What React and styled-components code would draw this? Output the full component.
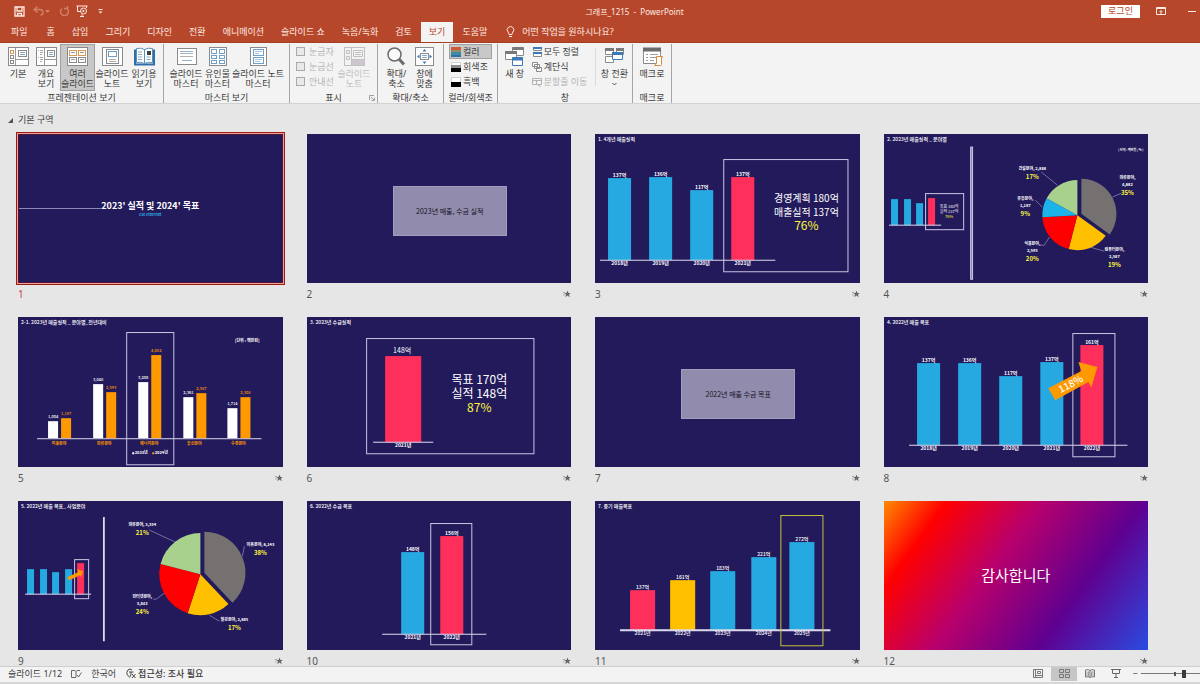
import React, { useState } from "react";
import styled, { createGlobalStyle } from "styled-components";

const GlobalStyle = createGlobalStyle`
  * {
    box-sizing: border-box;
  }
  body {
    margin: 0;
    font-family: "Noto Sans", "Noto Sans CJK KR", sans-serif;
    font-size: 9px;
    line-height: 10px;
    color: #3b3b3b;
  }
  button, input {
    font: inherit;
    color: inherit;
  }
`;

const Window = styled.div`
  display: flex;
  flex-direction: column;
  height: 100vh;
  background-color: #e6e6e6;
`;

const Header = styled.header`
  background-color: #b7472a;
  border-bottom: 1px solid #a33f26;
  color: #fdeae4;
`;

const TitleBar = styled.div`
  display: flex;
  align-items: center;
  height: 22px;
`;

const QuickAccess = styled.div`
  display: flex;
  align-items: center;
  padding-left: 12px;
  width: 112px;
`;

const BarButton = styled.button`
  display: flex;
  align-items: center;
  justify-content: center;
  width: ${({ $w }) => $w || 14}px;
  height: 16px;
  margin-right: ${({ $gap }) => $gap || 0}px;
  padding: 0;
  border: none;
  background: none;
  opacity: ${({ disabled }) => (disabled ? 0.35 : 1)};
`;

const Title = styled.h1`
  flex: 1;
  margin: 0;
  padding: 2px 0 0 56px;
  font-size: 8px;
  font-weight: 400;
  text-align: center;
  white-space: pre;
`;

const WindowActions = styled.div`
  display: flex;
  align-items: center;
  padding-right: 2px;
`;

const Login = styled.button`
  width: 39px;
  height: 13px;
  margin-right: 14px;
  padding: 0;
  border: none;
  background-color: #fff;
  color: #b7472a;
  line-height: 12px;
`;

const Tabs = styled.nav`
  display: flex;
  align-items: stretch;
  gap: 1px;
  height: 20px;
  padding-left: 3px;
`;

const Tab = styled.button`
  padding: 0 8px;
  margin-right: ${({ $wide }) => ($wide ? 2 : 0)}px;
  border: none;
  background-color: ${({ $active }) => ($active ? "#f3f3f3" : "transparent")};
  color: ${({ $active }) => ($active ? "#b7472a" : "inherit")};
  white-space: nowrap;
  cursor: pointer;
`;

const TellMe = styled.button`
  display: flex;
  align-items: center;
  gap: 7px;
  margin-left: 10px;
  padding: 0;
  border: none;
  background: none;
`;

const Ribbon = styled.div`
  display: flex;
  height: 61px;
  padding-top: 1px;
  background-color: #f3f3f3;
  border-bottom: 1px solid #d2d2d2;
`;

const Group = styled.section`
  position: relative;
  display: flex;
  flex-direction: column;
  width: ${({ $w }) => $w}px;
  border-right: 1px solid #a5a5a5;
`;

const GroupBody = styled.div`
  flex: 1;
  display: flex;
  justify-content: center;
  align-items: flex-start;
`;

const GroupLabel = styled.div`
  height: 10px;
  text-align: center;
  white-space: nowrap;
`;

const Launcher = styled.button`
  position: absolute;
  right: 1px;
  bottom: 1px;
  display: flex;
  padding: 1px;
  border: none;
  background: none;
`;

const LargeButton = styled.button`
  display: flex;
  flex-direction: column;
  align-items: center;
  width: ${({ $w }) => $w}px;
  height: 47px;
  padding: 2px 0 0;
  border: 1px solid ${({ $active }) => ($active ? "#a0a0a0" : "transparent")};
  background-color: ${({ $active }) => ($active ? "#c8c8c8" : "transparent")};
  color: ${({ disabled }) => (disabled ? "#b4b4b4" : "inherit")};
  opacity: ${({ disabled }) => (disabled ? 0.8 : 1)};
  white-space: pre;
  svg {
    flex: none;
    margin-bottom: 2px;
  }
`;

const Stack = styled.div`
  display: flex;
  flex-direction: column;
  width: ${({ $w }) => $w || "auto"};
`;

const SmallButton = styled.button`
  display: flex;
  align-items: center;
  gap: 2px;
  height: 15px;
  padding: 0 3px 0 1px;
  border: 1px solid ${({ $active }) => ($active ? "#a0a0a0" : "transparent")};
  background-color: ${({ $active }) => ($active ? "#c8c8c8" : "transparent")};
  color: ${({ disabled }) => (disabled ? "#b4b4b4" : "inherit")};
  white-space: nowrap;
`;

const CheckLabel = styled.label`
  display: flex;
  align-items: center;
  gap: 4px;
  height: 15px;
  color: #b4b4b4;
  white-space: nowrap;
`;

const CheckBox = styled.input`
  appearance: none;
  width: 9px;
  height: 9px;
  margin: 0;
  border: 1px solid #a9a9a9;
  background-color: #e9e9e9;
`;

const Divider = styled.div`
  width: 1px;
  height: 38px;
  margin: 4px 2px 0 4px;
  background-color: #dadada;
`;

const Workspace = styled.main`
  flex: 1;
  min-height: 0;
  overflow-y: auto;
  scrollbar-width: none;
`;

const SectionTitle = styled.h2`
  display: flex;
  align-items: center;
  gap: 5px;
  height: 30px;
  margin: 0;
  padding: 2px 0 0 8px;
  font-size: 9px;
  font-weight: 400;
`;

const SlideGrid = styled.ol`
  display: grid;
  grid-template-columns: repeat(4, 1fr);
  column-gap: 24px;
  margin: 0;
  padding: 0 52px 0 18px;
  list-style: none;
`;

const Slide = styled.div`
  display: grid;
  place-items: center;
  aspect-ratio: 264 / 149;
  overflow: hidden;
  background: ${({ $background }) => $background || "#231a5b"};
  box-shadow: ${({ $selected }) =>
    $selected ? "0 0 0 1px #f0a096, 0 0 0 2px #9c1c14" : "none"};
  border: ${({ $selected }) => ($selected ? "1px solid #4d1638" : "none")};
  color: #fff;
  font-family: "Noto Sans CJK KR", sans-serif;
`;

const Caption = styled.div`
  display: flex;
  align-items: center;
  justify-content: space-between;
  height: 34px;
  padding-bottom: 12px;
  font-size: 10px;
  color: ${({ $selected }) => ($selected ? "#c8443c" : "#555")};
`;

const Cover = styled.div`
  display: grid;
  grid-template-columns: 1fr auto 1fr;
  align-items: center;
  width: 100%;
`;

const CoverLine = styled.div`
  height: 1px;
  margin-top: 5px;
  background-color: #8d88b4;
`;

const CoverTitle = styled.div`
  font-size: 9px;
  font-weight: 700;
  line-height: 10px;
`;

const CoverSub = styled.div`
  grid-column: 2;
  font-size: 4px;
  font-weight: 500;
  line-height: 6px;
  text-align: center;
  color: #2fc0f5;
`;

const Plate = styled.div`
  display: grid;
  place-items: center;
  width: 43%;
  height: 50px;
  margin: 5px 0 0 22px;
  border: 1px solid #a29dbd;
  background-color: #918bad;
  color: #16121f;
  font-size: 7px;
  white-space: nowrap;
`;

const Thanks = styled.div`
  font-size: 15px;
  line-height: 20px;
`;

const Canvas = styled.svg`
  display: block;
  width: 100%;
  height: 100%;
  fill: #fff;
  font-size: 5px;
  font-weight: 700;
  text-anchor: middle;
`;

const StatusBar = styled.footer`
  display: flex;
  align-items: center;
  height: 18px;
  padding: 0 0 2px 8px;
  border-top: 1px solid #cfcfcf;
  border-bottom: 2px solid #d6d6d6;
  background-color: #f3f3f3;
`;

const StatusItem = styled.button`
  display: flex;
  align-items: center;
  gap: 2px;
  height: 14px;
  margin-right: 9px;
  padding: 0;
  border: none;
  background: none;
  font-weight: ${({ $strong }) => ($strong ? 500 : 400)};
  white-space: nowrap;
`;

const StatusRight = styled.div`
  display: flex;
  align-items: center;
  margin-left: auto;
`;

const ViewButton = styled.button`
  display: flex;
  align-items: center;
  justify-content: center;
  width: 26px;
  height: 14px;
  padding: 0;
  border: none;
  background-color: ${({ $active }) => ($active ? "#c6c6c6" : "transparent")};
`;

const ZoomButton = styled.button`
  width: 12px;
  padding: 0;
  border: none;
  background: none;
`;

const ZoomSlider = styled.input`
  appearance: none;
  width: 59px;
  height: 8px;
  margin: 0;
  background: linear-gradient(#555, #555) 33px 50% / 2px 4px no-repeat,
    linear-gradient(#777, #777) 0 50% / 100% 1px no-repeat;
  &::-webkit-slider-thumb {
    appearance: none;
    width: 4px;
    height: 8px;
    background-color: #3a3a3a;
  }
`;

const gray = { fill: "#fff", stroke: "#8a8a8a" };
const blue = { fill: "#fff", stroke: "#6f9fc6" };
const orange = { fill: "#fff", stroke: "#d99a55" };

const icons = {
  normal: (
    <>
      <rect x="0.5" y="0.5" width="20" height="18" {...gray} />
      <path d="M7.5 1v17M8 12.5h12" stroke="#9a9a9a" />
      <rect x="2.5" y="3.5" width="3" height="3" {...orange} />
      <rect x="2.5" y="8.5" width="3" height="3" {...gray} />
      <rect x="2.5" y="13.5" width="3" height="3" {...gray} />
      <rect x="10.5" y="3.5" width="8" height="6" {...gray} />
      <path d="M12 5.5h5M12 7.5h5" stroke="#8aa9c4" />
    </>
  ),
  outline: (
    <>
      <rect x="0.5" y="0.5" width="20" height="18" {...gray} />
      <path d="M8.5 1v17M9 12.5h11" stroke="#9a9a9a" />
      <path d="M2 3.5h1M4 3.5h3M4 5.5h3M4 7.5h2M2 10.5h1M4 10.5h3M4 12.5h3M4 14.5h2" stroke="#a5a5a5" />
      <rect x="11.5" y="3.5" width="7" height="6" {...gray} />
      <path d="M13 5.5h4M13 7.5h4" stroke="#8aa9c4" />
    </>
  ),
  sorter: (
    <>
      <rect x="0.5" y="0.5" width="20" height="18" {...gray} />
      <rect x="2.5" y="3.5" width="7" height="5" {...orange} />
      <rect x="11.5" y="3.5" width="7" height="5" {...orange} />
      <rect x="2.5" y="10.5" width="7" height="5" {...gray} />
      <rect x="11.5" y="10.5" width="7" height="5" {...gray} />
      <path d="M4 5.5h4M13 5.5h4M4 12.5h4M13 12.5h4" stroke="#9a9a9a" />
    </>
  ),
  notes: (
    <>
      <rect x="0.5" y="0.5" width="20" height="18" {...gray} />
      <rect x="4.5" y="2.5" width="12" height="14" {...gray} />
      <rect x="6.5" y="4.5" width="8" height="5" {...blue} />
      <path d="M7 12.5h7M7 14.5h7" stroke="#b0b0b0" />
    </>
  ),
  reading: (
    <>
      <path d="M1 2.5v15h19v-15" fill="#dcebf7" stroke="#2f6ea8" strokeWidth="2" />
      <path d="M2.5 1.5q4-1 8 1q4-2 8-1v14q-4-1-8 1q-4-2-8-1z" fill="#fff" stroke="#5b8fb9" />
      <path d="M10.5 2.5v14" stroke="#5b8fb9" />
      <path d="M4 5h4M4 7.5h4M4 10h4M4 12.5h4M12.5 10h4M12.5 12.5h4" stroke="#7fa8ca" />
      <rect x="13" y="4" width="4" height="4" fill="#3f3f3f" />
    </>
  ),
  slideMaster: (
    <>
      <rect x="1.5" y="1.5" width="19" height="16" {...gray} />
      <path d="M4 6.5h13M4 9.5h13" stroke="#b0b0b0" />
      <path d="M4 4.5h13M6 13.5h10" stroke="#8fb3d2" />
    </>
  ),
  handoutMaster: (
    <>
      <rect x="2.5" y="0.5" width="17" height="18" {...gray} />
      <rect x="4.5" y="2.5" width="5" height="4" {...blue} />
      <rect x="12.5" y="2.5" width="5" height="4" {...blue} />
      <rect x="4.5" y="8.5" width="5" height="3" {...blue} />
      <rect x="12.5" y="8.5" width="5" height="3" {...blue} />
      <rect x="4.5" y="13.5" width="5" height="3" {...blue} />
      <rect x="12.5" y="13.5" width="5" height="3" {...blue} />
    </>
  ),
  notesMaster: (
    <>
      <rect x="2.5" y="0.5" width="16" height="18" {...gray} />
      <rect x="5.5" y="2.5" width="10" height="6" {...blue} />
      <path d="M7 4.5h7M7 6.5h4" stroke="#a5c3dc" />
      <rect x="5.5" y="10.5" width="10" height="6" {...blue} />
      <path d="M7 12.5h7M7 14.5h5" stroke="#a5c3dc" />
    </>
  ),
  notesPane: (
    <>
      <rect x="0.5" y="0.5" width="20" height="18" fill="#f3f3f3" stroke="#b5b5b5" />
      <rect x="7" y="13" width="13" height="5" fill="#c4bcc4" />
      <path d="M7.5 1v17M8 12.5h12" stroke="#b5b5b5" />
      <path d="M2.5 3.5h3v3h-3zM2.5 9.5h3v3h-3zM9.5 3.5h9v6h-9zM11 5.5h6M11 7.5h6" fill="none" stroke="#b5b5b5" />
    </>
  ),
  zoom: (
    <>
      <circle cx="8.5" cy="7.5" r="6.5" fill="#fafafa" stroke="#6b6b6b" strokeWidth="1.5" />
      <path d="M13 12l5 5.5" stroke="#6b6b6b" strokeWidth="3" />
    </>
  ),
  fit: (
    <>
      <rect x="1.5" y="0.5" width="18" height="18" {...gray} />
      <rect x="6.5" y="6.5" width="8" height="6" {...gray} />
      <path d="M10.5 2l2 2.5h-4zM10.5 17l2-2.5h-4zM3 9.5l2.5-2v4zM18 9.5l-2.5-2v4z" fill="#3d7ab5" />
      <path d="M8 8.500h5M8 10.500h5" stroke="#7fa8ca" />
    </>
  ),
  newWindow: (
    <>
      <path d="M8.5 0.5h11v8h-11z" {...gray} />
      <path d="M8.5 1.5h11" stroke="#7a7a7a" strokeWidth="3" />
      <path d="M1.5 4.5h11v8h-11z" {...gray} />
      <path d="M1 5.5h12" stroke="#7a7a7a" strokeWidth="3" />
      <path d="M8.5 10.5h10v8h-10z" fill="#fff" stroke="#3d7ab5" />
      <path d="M8 12h11" stroke="#3d7ab5" strokeWidth="3" />
    </>
  ),
  switchWindow: (
    <>
      <path d="M1.5 1.5h8v6h-8zM12.5 1.5h7v6h-7zM1.5 9.5h8v6h-8z" {...gray} />
      <path d="M1 2.5h9M12 2.5h8" stroke="#7a7a7a" strokeWidth="3" />
      <path d="M8.5 5.5h10v7h-10z" fill="#fff" stroke="#3d7ab5" />
      <path d="M8 6.5h11" stroke="#3d7ab5" strokeWidth="3" />
    </>
  ),
  macro: (
    <>
      <path d="M1.5 1.5h17v15h-17z" {...gray} />
      <path d="M1 2.5h18" stroke="#6b6b6b" strokeWidth="4" />
      <path d="M4 7.5h2M8 7.5h8M4 10.5h2M8 10.5h6M4 13.5h2M8 13.5h4" stroke="#9a9a9a" />
      <path d="M14.5 9.5h6v1h-1v7q0 1-1 1h-6q1 0 1-2h1z" fill="#fff" stroke="#dd8a3a" />
    </>
  ),
};

const RibbonIcon = ({ name }) => (
  <svg width="21" height="20" viewBox="0 0 21 20" fill="none" aria-hidden="true">
    {icons[name]}
  </svg>
);

const smallIcons = {
  color: (
    <>
      <rect width="10" height="3" fill="#d0583a" />
      <rect y="3" width="10" height="2" fill="#8d8f6a" />
      <rect y="5" width="10" height="3" fill="#3d8ba5" />
      <rect y="8" width="10" height="2" fill="#2f6ea8" />
    </>
  ),
  grayscale: (
    <>
      <path d="M0.5 4V0.5h9V4" fill="#fff" stroke="#d0d0d0" />
      <rect y="3" width="10" height="3" fill="#8c8c8c" />
      <rect y="6" width="10" height="4" fill="#000" />
    </>
  ),
  mono: (
    <>
      <path d="M0.5 5V0.5h9V5" fill="#fff" stroke="#d0d0d0" />
      <rect y="5" width="10" height="5" fill="#000" />
    </>
  ),
  arrange: (
    <>
      <path d="M1.5 0.5h8v3h-8zM1.5 5.5h8v4h-8z" {...gray} />
      <path d="M1 1h9M1 6h9" stroke="#3d7ab5" strokeWidth="2" />
    </>
  ),
  cascade: (
    <path d="M0.5 0.5h5v4h-5zM2.5 2.5h5v4h-5zM4.5 5.5h5v4h-5z" {...gray} />
  ),
  split: (
    <path d="M0.5 1.5h9v6h-9zM0.5 3.5h9M4.5 3.5v4M6 8l3 2" fill="none" stroke="#b4b4b4" />
  ),
};

const SmallIcon = ({ name }) => (
  <svg width="10" height="10" viewBox="0 0 10 10" fill="none" aria-hidden="true">
    {smallIcons[name]}
  </svg>
);

const BLUE = "#25a9e0";
const PINK = "#ff2f5b";
const AMBER = "#ffc000";
const ORANGE = "#ff9900";
const YELLOW = "#fbf63c";

// [x, top, fill, label, year]
const Bars = ({ items, width, base, from, to, axis = 1 }) => (
  <>
    {items.map(([x, top, fill]) => (
      <rect key={x} x={x} y={top} width={width} height={base - top} fill={fill} />
    ))}
    <rect x={from} y={base - axis / 2} width={to - from} height={axis} fill="#dcd9ee" />
    {items.map(
      ([x, top, , label, year]) =>
        label && (
          <g key={x}>
            <text x={x + width / 2} y={top - 1}>{label}</text>
            <text x={x + width / 2} y={base + 5}>{year}</text>
          </g>
        )
    )}
  </>
);

const Frame = ({ x, y, w, h, color = "#c9c5e2" }) => (
  <rect x={x} y={y} width={w} height={h} fill="none" stroke={color} />
);

const SlideTitle = ({ children }) => (
  <text x="3" y="7" textAnchor="start" fontWeight="500">{children}</text>
);

const slicePath = (cx, cy, r, from, to) => {
  const point = (p) => {
    const a = p * 2 * Math.PI;
    return `${cx + r * Math.sin(a)} ${cy - r * Math.cos(a)}`;
  };
  return `M${cx} ${cy}L${point(from)}A${r} ${r} 0 0 1 ${point(to)}Z`;
};

const Pie = ({ cx, cy, r, slices }) => {
  let start = 0;
  return slices.map(([share, fill], i) => {
    const from = start;
    start += share;
    // the leading slice is pulled out of the pie
    const out = i === 0 ? 4 : 0;
    return (
      <path key={fill} fill={fill} d={slicePath(cx + out, cy - out / 3, r, from, start)} />
    );
  });
};

const PieLabel = ({ x, y, lines, percent }) => (
  <>
    {lines.map((line, i) => (
      <text key={line} x={x} y={y + i * 7} fontSize="4">{line}</text>
    ))}
    <text x={x} y={y + lines.length * 7 + 2} fontSize="6" fill={YELLOW}>{percent}</text>
  </>
);

const Leader = ({ d }) => <path d={d} fill="none" stroke="#a9a5cf" strokeWidth="0.6" />;

const Summary = ({ x, y, size, lines, percent }) => (
  <g fontWeight="400">
    <text x={x} y={y} fontSize={size}>{lines[0]}</text>
    <text x={x} y={y + 14} fontSize={size}>{lines[1]}</text>
    <text x={x} y={y + 28} fontSize="12" fill={YELLOW}>{percent}</text>
  </g>
);

const FourYears = () => (
  <Canvas viewBox="0 0 264 149">
    <SlideTitle>1. 4개년 매출실적</SlideTitle>
    <Bars
      width={23}
      base={126}
      from={5}
      to={180}
      items={[
        [13, 44, BLUE, "137억", "2018년"],
        [54, 43, BLUE, "136억", "2019년"],
        [95, 56, BLUE, "117억", "2020년"],
        [136, 43, PINK, "137억", "2021년"],
      ]}
    />
    <Frame x={128.5} y={25.5} w={124} h={112} />
    <Summary x={211} y={68} size={10} lines={["경영계획 180억", "매출실적 137억"]} percent="76%" />
  </Canvas>
);

const SalesByField = () => (
  <Canvas viewBox="0 0 264 149">
    <SlideTitle>2. 2023년 매출실적 _ 분야별</SlideTitle>
    <rect x="86.5" y="13" width="2" height="132" fill="#8a84bb" stroke="#e3e0f4" strokeWidth="0.8" />
    <text x="259" y="17" fontSize="3" textAnchor="end">[ 단위 : 백만원 / % ]</text>
    <Bars
      width={7}
      base={91}
      from={5}
      to={57}
      items={[
        [7, 65, BLUE],
        [20, 65, BLUE],
        [32, 69, BLUE],
        [44, 64, PINK],
      ]}
    />
    <Frame x={41.5} y={59.5} w={38} h={36} />
    <g fontSize="4" fontWeight="400">
      <text x="65" y="74">목표 180억</text>
      <text x="65" y="79">실적 137억</text>
      <text x="65" y="84" fill={YELLOW}>76%</text>
    </g>
    <Pie
      cx={193}
      cy={81}
      r={35}
      slices={[
        [0.35, "#767171"],
        [0.19, AMBER],
        [0.2, "#ff0000"],
        [0.09, "#1cb4e8"],
        [0.17, "#a9d18e"],
      ]}
    />
    <Leader d="M157 38L173 51M151 66L158 73M228 63L237 59M206 113L220 117M165 103L160 111H156" />
    <PieLabel x={148} y={36} lines={["건설분야, 2,888"]} percent="17%" />
    <PieLabel x={141} y={66} lines={["유통분야,", "1,187"]} percent="9%" />
    <PieLabel x={148} y={111} lines={["식품분야,", "2,593"]} percent="20%" />
    <PieLabel x={243} y={45} lines={["의류분야,", "4,682"]} percent="35%" />
    <PieLabel x={230} y={117} lines={["컴퓨터분야,", "2,587"]} percent="19%" />
  </Canvas>
);

const fields = [
  [30, 104, "1,004", 101, "1,187", "미용분야"],
  [75, 67, "3,048", 75, "2,593", "의류분야"],
  [120, 65, "3,206", 38, "4,682", "에너지분야"],
  [165, 80, "2,361", 76, "2,587", "통신분야"],
  [209, 91, "1,714", 80, "2,308", "수경분야"],
];

const YearOverYear = () => (
  <Canvas viewBox="0 0 264 149">
    <SlideTitle>2-1. 2023년 매출실적 _ 분야별_전년대비</SlideTitle>
    <text x="241" y="25" fontSize="4" textAnchor="end">[단위 : 백만원]</text>
    {fields.map(([x, a, aLabel, b, bLabel, name]) => (
      <g key={name} fontSize="4">
        <rect x={x} y={a} width="10" height={121 - a} />
        <text x={x + 5} y={a - 3} fontWeight="500">{aLabel}</text>
        <g fill={ORANGE}>
          <rect x={x + 13} y={b} width="10" height={121 - b} />
          <text x={x + 18} y={b - 3} fontWeight="500">{bLabel}</text>
          <text x={x + 11} y="128">{name}</text>
        </g>
      </g>
    ))}
    <rect x="19" y="121" width="224" height="1" fill="#dcd9ee" />
    <Frame x={108.5} y={15.5} w={47} h={132} />
    <rect x="114" y="135" width="2" height="2" />
    <text x="123" y="137" fontSize="4">2023년</text>
    <rect x="134" y="135" width="2" height="2" fill={ORANGE} />
    <text x="143" y="137" fontSize="4">2024년</text>
  </Canvas>
);

const Collection = () => (
  <Canvas viewBox="0 0 264 149">
    <SlideTitle>3. 2023년 수금실적</SlideTitle>
    <Frame x={59.5} y={21.5} w={167} h={115} />
    <Bars width={36} base={125} from={66} to={126} items={[[78, 39, PINK]]} />
    <text x="95" y="36" fontSize="7" fontWeight="400">148억</text>
    <text x="96" y="130">2021년</text>
    <Summary x={172} y={67} size={12} lines={["목표 170억", "실적 148억"]} percent="87%" />
  </Canvas>
);

const SalesTarget = () => (
  <Canvas viewBox="0 0 264 149">
    <SlideTitle>4. 2022년 매출 목표</SlideTitle>
    <Bars
      width={23}
      base={128}
      from={25}
      to={243}
      items={[
        [33, 46, BLUE, "137억", "2018년"],
        [74, 46, BLUE, "136억", "2019년"],
        [115, 59, BLUE, "117억", "2020년"],
        [156, 45, BLUE, "137억", "2021년"],
        [196, 28, PINK, "161억", "2022년"],
      ]}
    />
    <Frame x={188.5} y={16.5} w={42} h={123} />
    <path d="M164 71L197 54L194 45L213 50L207 70L204 65L171 83Z" fill={ORANGE} />
    <text transform="translate(188 70) rotate(-28)" fontSize="10" fontWeight="500">118%</text>
  </Canvas>
);

const TargetByBusiness = () => (
  <Canvas viewBox="0 0 264 149">
    <SlideTitle>5. 2022년 매출 목표_ 사업분야</SlideTitle>
    <rect x="85" y="16" width="1.5" height="124" />
    <Bars
      width={7}
      base={93}
      from={7}
      to={73}
      items={[
        [9, 68, BLUE],
        [22, 68, BLUE],
        [34, 71, BLUE],
        [47, 68, BLUE],
        [59, 62, PINK],
      ]}
    />
    <Frame x={56.5} y={58.5} w={14} h={39} />
    <path d="M49 76L60 71L59 68L65 70L63 76L62 74L51 79Z" fill={ORANGE} />
    <Pie
      cx={182}
      cy={73}
      r={41}
      slices={[
        [0.38, "#767171"],
        [0.17, AMBER],
        [0.24, "#ff0000"],
        [0.21, "#a9d18e"],
      ]}
    />
    <Leader d="M131 29L157 41M224 55L226 45M146 92L138 98H135M191 114L201 120" />
    <PieLabel x={124} y={25} lines={["의류분야, 3,334"]} percent="21%" />
    <PieLabel x={242} y={45} lines={["이동분야, 6,143"]} percent="38%" />
    <PieLabel x={124} y={97} lines={["인터넷분야,", "3,843"]} percent="24%" />
    <PieLabel x={216} y={120} lines={["철강분야, 2,685"]} percent="17%" />
  </Canvas>
);

const CollectionTarget = () => (
  <Canvas viewBox="0 0 264 149">
    <SlideTitle>6. 2022년 수금 목표</SlideTitle>
    <Bars
      width={23}
      base={133}
      from={75}
      to={179}
      items={[
        [94, 51, BLUE, "148억", "2021년"],
        [133, 35, PINK, "156억", "2022년"],
      ]}
    />
    <Frame x={123.5} y={22.5} w={41} h={121} />
  </Canvas>
);

const MidTerm = () => (
  <Canvas viewBox="0 0 264 149">
    <SlideTitle>7. 중기 매출목표</SlideTitle>
    <g fontWeight="500">
      <Bars
        width={25}
        base={129}
        from={25}
        to={235}
        axis={2}
        items={[
          [35, 89, PINK, "137억", "2021년"],
          [75, 79, AMBER, "161억", "2022년"],
          [115, 70, BLUE, "183억", "2023년"],
          [156, 56, BLUE, "221억", "2024년"],
          [194, 41, BLUE, "272억", "2025년"],
        ]}
      />
    </g>
    <Frame x={185.5} y={14.5} w={42} h={130} color="#c4c03c" />
  </Canvas>
);

const sunset =
  "linear-gradient(126deg, #ff8a00 0%, #ff0000 17%, #b8006c 42%, #5f0090 70%, #2a4be0 100%)";

const slides = [
  {
    content: (
      <Cover>
        <CoverLine />
        <CoverTitle>2023' 실적 및 2024' 목표</CoverTitle>
        <CoverSub>Cal Internet</CoverSub>
      </Cover>
    ),
    still: true,
  },
  { content: <Plate>2023년 매출, 수금 실적</Plate> },
  { content: <FourYears /> },
  { content: <SalesByField /> },
  { content: <YearOverYear /> },
  { content: <Collection /> },
  { content: <Plate>2022년 매출 수금 목표</Plate> },
  { content: <SalesTarget /> },
  { content: <TargetByBusiness /> },
  { content: <CollectionTarget /> },
  { content: <MidTerm /> },
  { content: <Thanks>감사합니다</Thanks>, background: sunset },
];

const tabs = [
  "파일",
  "홈",
  "삽입",
  "그리기",
  "디자인",
  "전환",
  "애니메이션",
  "슬라이드 쇼",
  "녹음/녹화",
  "검토",
  "보기",
  "도움말",
];

const Star = () => (
  <svg width="8" height="8" viewBox="0 0 8 8" aria-label="전환 효과">
    <path d="M4.500 0.500l1 2.400h2.300l-1.800 1.600.7 2.700-2.200-1.600-2.200 1.600.7-2.700-1.800-1.600h2.300z" fill="#666" />
    <path d="M0 2.500h2M0 5h1.500" stroke="#888" strokeWidth="0.7" />
  </svg>
);

const Caret = () => (
  <svg width="5" height="6" viewBox="0 0 5 6" fill="currentColor" aria-hidden="true">
    <path d="M0.500 1h4v1h-4zM0.500 3.500h4l-2 2z" />
  </svg>
);

const Large = ({ icon, w, children, ...rest }) => (
  <LargeButton $w={w} {...rest}>
    <RibbonIcon name={icon} />
    {children}
  </LargeButton>
);

const Small = ({ icon, children, ...rest }) => (
  <SmallButton {...rest}>
    <SmallIcon name={icon} />
    {children}
  </SmallButton>
);

const App = () => {
  const [tab, setTab] = useState("보기");
  const [zoom, setZoom] = useState(75);

  return (
    <Window>
      <GlobalStyle />
      <Header>
        <TitleBar>
          <QuickAccess>
            <BarButton aria-label="저장" $gap={6}>
              <svg width="11" height="11" viewBox="0 0 11 11" fill="none" stroke="currentColor">
                <path d="M1 1h9v9H1zM3 1v4h5V1M3.500 10V7.500h4V10" strokeWidth="1.3" />
              </svg>
            </BarButton>
            <BarButton aria-label="실행 취소" disabled $w={12}>
              <svg width="11" height="10" viewBox="0 0 11 10" fill="none" stroke="currentColor" strokeWidth="1.4">
                <path d="M4.500 0.500L1 3.500l3.500 3M1 3.500h5.500q3.500 0 3.500 3q0 2.500-2.500 2.500" />
              </svg>
            </BarButton>
            <BarButton aria-label="실행 취소 목록" disabled $w={7} $gap={6}>
              <svg width="5" height="3" viewBox="0 0 5 3" fill="currentColor">
                <path d="M0 0h5l-2.500 3z" />
              </svg>
            </BarButton>
            <BarButton aria-label="다시 실행" disabled $gap={4}>
              <svg width="11" height="11" viewBox="0 0 11 11" fill="none" stroke="currentColor" strokeWidth="1.4">
                <path d="M3 2.500a4 4 0 1 0 5 0M5 2.500h3.500V0" />
              </svg>
            </BarButton>
            <BarButton aria-label="슬라이드 쇼 시작" $gap={8}>
              <svg width="12" height="12" viewBox="0 0 12 12" fill="none" stroke="currentColor">
                <path d="M0.500 1h11M1.500 1v5.500h3M10.500 1v2M4 11.500h4M6 9.500v2" />
                <circle cx="7.500" cy="6" r="3" />
                <path d="M6.500 4.500l2.500 1.500-2.500 1.500z" fill="currentColor" stroke="none" />
              </svg>
            </BarButton>
            <BarButton aria-label="빠른 실행 도구 모음 사용자 지정" $w={6}>
              <Caret />
            </BarButton>
          </QuickAccess>
          <Title>그래프_1215  -  PowerPoint</Title>
          <WindowActions>
            <Login>로그인</Login>
            <BarButton aria-label="리본 메뉴 표시 옵션" $gap={18}>
              <svg width="10" height="8" viewBox="0 0 10 8" fill="none" stroke="currentColor">
                <path d="M0.500 0.500h9v7h-9zM0 1.500h10M5 7V4M3.500 5L5 3.500 6.500 5" />
              </svg>
            </BarButton>
            <BarButton aria-label="최소화" $w={12}>
              <svg width="8" height="3" viewBox="0 0 8 3">
                <path d="M0 1h8v1H0z" fill="currentColor" />
              </svg>
            </BarButton>
          </WindowActions>
        </TitleBar>
        <Tabs>
          {tabs.map((name) => (
            <Tab
              key={name}
              $wide={name === "파일"}
              $active={name === tab}
              onClick={() => setTab(name)}
            >
              {name}
            </Tab>
          ))}
          <TellMe>
            <svg width="9" height="12" viewBox="0 0 9 12" fill="none" stroke="currentColor">
              <path d="M3 8.500q0-1.500-1-2.500a3.300 3.300 0 1 1 5 0q-1 1-1 2.500zM3 10.500h3" />
            </svg>
            어떤 작업을 원하시나요?
          </TellMe>
        </Tabs>
      </Header>
      <Ribbon>
        <Group $w={164}>
          <GroupBody>
            <Large icon="normal" w={28}>기본</Large>
            <Large icon="outline" w={28}>{"개요\n보기"}</Large>
            <Large icon="sorter" w={35} $active>{"여러\n슬라이드"}</Large>
            <Large icon="notes" w={34}>{"슬라이드\n노트"}</Large>
            <Large icon="reading" w={30}>{"읽기용\n보기"}</Large>
          </GroupBody>
          <GroupLabel>프레젠테이션 보기</GroupLabel>
        </Group>
        <Group $w={126}>
          <GroupBody>
            <Large icon="slideMaster" w={34}>{"슬라이드\n마스터"}</Large>
            <Large icon="handoutMaster" w={29}>{"유인물\n마스터"}</Large>
            <Large icon="notesMaster" w={52}>{"슬라이드 노트\n마스터"}</Large>
          </GroupBody>
          <GroupLabel>마스터 보기</GroupLabel>
        </Group>
        <Group $w={88}>
          <GroupBody>
            <Stack $w="41px">
              <CheckLabel><CheckBox type="checkbox" disabled />눈금자</CheckLabel>
              <CheckLabel><CheckBox type="checkbox" disabled />눈금선</CheckLabel>
              <CheckLabel><CheckBox type="checkbox" disabled />안내선</CheckLabel>
            </Stack>
            <Large icon="notesPane" w={34} disabled>{"슬라이드\n노트"}</Large>
          </GroupBody>
          <GroupLabel>표시</GroupLabel>
          <Launcher aria-label="눈금 설정">
            <svg width="6" height="6" viewBox="0 0 6 6" fill="none" stroke="#8a8a8a">
              <path d="M0.500 5V0.500H5M2 2l3 3M5.500 2.500v3h-3" strokeWidth="0.8" />
            </svg>
          </Launcher>
        </Group>
        <Group $w={66}>
          <GroupBody>
            <Large icon="zoom" w={28}>{"확대/\n축소"}</Large>
            <Large icon="fit" w={28}>{"창에\n맞춤"}</Large>
          </GroupBody>
          <GroupLabel>확대/축소</GroupLabel>
        </Group>
        <Group $w={54}>
          <GroupBody>
            <Stack>
              <Small icon="color" $active>컬러</Small>
              <Small icon="grayscale">회색조</Small>
              <Small icon="mono">흑백</Small>
            </Stack>
          </GroupBody>
          <GroupLabel>컬러/회색조</GroupLabel>
        </Group>
        <Group $w={135}>
          <GroupBody>
            <Large icon="newWindow" w={30}>새 창</Large>
            <Stack>
              <Small icon="arrange">모두 정렬</Small>
              <Small icon="cascade">계단식</Small>
              <Small icon="split" disabled>분할줄 이동</Small>
            </Stack>
            <Divider />
            <Large icon="switchWindow" w={32}>
              창 전환
              <svg width="5" height="8" viewBox="0 0 5 8" fill="none" stroke="#555">
                <path d="M0.500 4l2 2 2-2" />
              </svg>
            </Large>
          </GroupBody>
          <GroupLabel>창</GroupLabel>
        </Group>
        <Group $w={39}>
          <GroupBody>
            <Large icon="macro" w={30}>매크로</Large>
          </GroupBody>
          <GroupLabel>매크로</GroupLabel>
        </Group>
      </Ribbon>
      <Workspace>
        <SectionTitle>
          <svg width="5" height="5" viewBox="0 0 5 5" aria-hidden="true">
            <path d="M5 0v5H0z" fill="#555" />
          </svg>
          기본 구역
        </SectionTitle>
        <SlideGrid>
          {slides.map(({ content, background, still }, i) => (
            <li key={i}>
              <Slide $background={background} $selected={i === 0}>{content}</Slide>
              <Caption $selected={i === 0}>
                {i + 1}
                {!still && <Star />}
              </Caption>
            </li>
          ))}
        </SlideGrid>
      </Workspace>
      <StatusBar>
        <StatusItem>슬라이드 1/12</StatusItem>
        <StatusItem aria-label="맞춤법 검사">
          <svg width="11" height="10" viewBox="0 0 11 10" fill="none" stroke="#666">
            <path d="M5 8.500H0.500v-7H3q1.500 0 2 1 0.500-1 2-1h2M5 2.500V8M6 6l1.500 2L10.500 3.500" />
          </svg>
        </StatusItem>
        <StatusItem>한국어</StatusItem>
        <StatusItem $strong>
          <svg width="11" height="11" viewBox="0 0 11 11" fill="none" stroke="#444">
            <path d="M5 1a4 4 0 0 0-1 7.500M5 1l2 1M4 4h4.500M6 4v2.500L4.500 9.500M7 6l3.500 4M10.500 6L7 10" />
          </svg>
          접근성: 조사 필요
        </StatusItem>
        <StatusRight>
          <ViewButton aria-label="기본 보기">
            <svg width="10" height="9" viewBox="0 0 10 9" fill="none" stroke="#777">
              <path d="M0.500 0.500h9v8h-9zM2.500 1v7M4.500 2.500h3v2h-3zM3 6.500h6" />
            </svg>
          </ViewButton>
          <ViewButton aria-label="여러 슬라이드 보기" $active>
            <svg width="11" height="9" viewBox="0 0 11 9" fill="none" stroke="#777">
              <path d="M0.500 0.500h4v3h-4zM6.500 0.500h4v3h-4zM0.500 5.500h4v3h-4zM6.500 5.500h4v3h-4z" />
            </svg>
          </ViewButton>
          <ViewButton aria-label="읽기용 보기">
            <svg width="10" height="9" viewBox="0 0 10 9" fill="none" stroke="#777">
              <path d="M0.500 1q3-1 4.500 0.500Q6.500 0 9.500 1v7q-3-1-4.500 0.500Q3.500 7 0.500 8zM5 1.500v7" />
              <path d="M6.500 2.500v4.500M8 2v5M2 2.500v4.500M3.500 2.500v5" strokeWidth="0.7" />
            </svg>
          </ViewButton>
          <ViewButton aria-label="슬라이드 쇼">
            <svg width="10" height="9" viewBox="0 0 10 9" fill="none" stroke="#666">
              <path d="M0 0.500h10M1.500 1v3.500h7V1M5 5v3.500M3 8.500h4" />
            </svg>
          </ViewButton>
          <ZoomButton aria-label="축소">−</ZoomButton>
          <ZoomSlider
            type="range"
            aria-label="확대/축소"
            value={zoom}
            onChange={(e) => setZoom(e.target.value)}
          />
        </StatusRight>
      </StatusBar>
    </Window>
  );
};

export default App;
